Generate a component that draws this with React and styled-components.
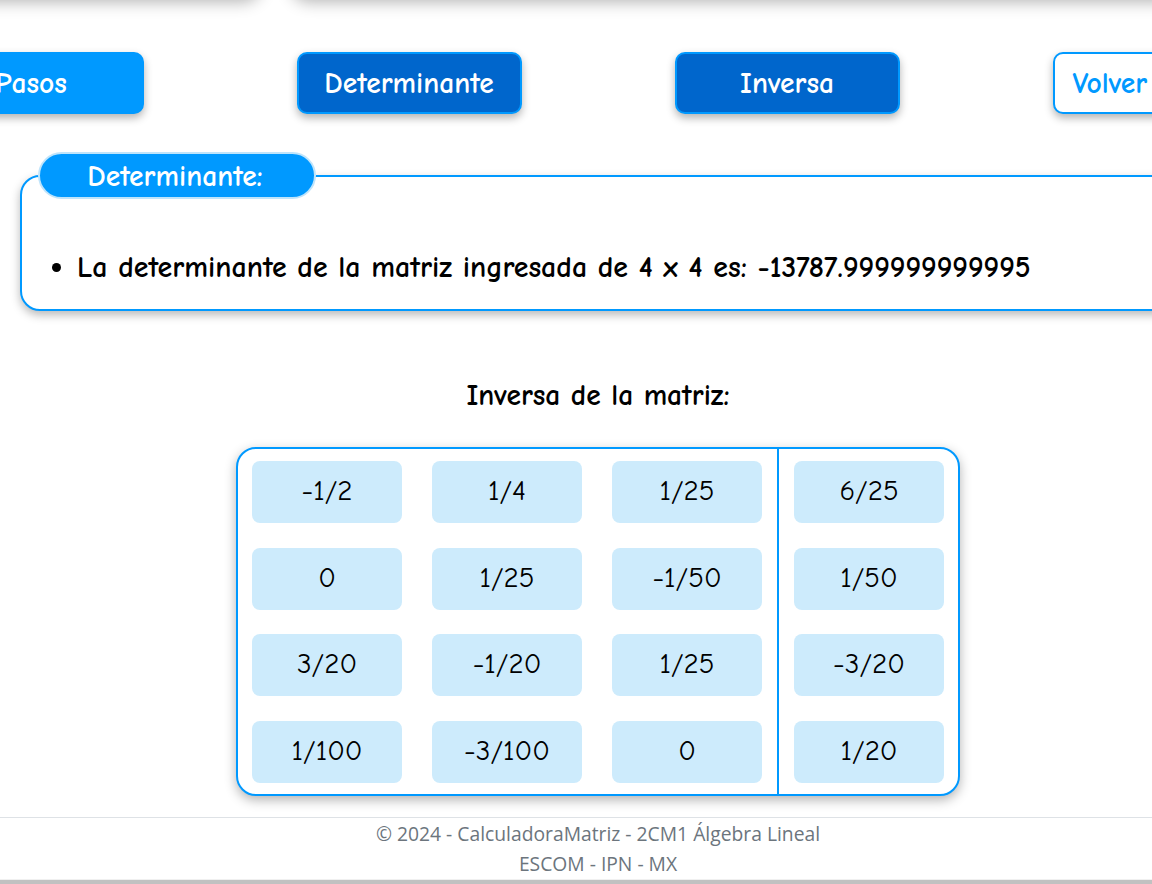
import React from "react";
import styled, { createGlobalStyle } from "styled-components";

const Global = createGlobalStyle`
  html, body { margin: 0; padding: 0; overflow: hidden; background: #fff; }
  body { font-family: "Comic Sans MS", "Comic Neue", Lato, sans-serif; }
`;

const Viewport = styled.div`
  width: 1152px;
  height: 884px;
  overflow: hidden;
  display: flex;
  flex-direction: column;
`;

const Page = styled.div`
  width: 1196px;
  flex: 1;
  display: flex;
  flex-direction: column;
`;

const TopStrip = styled.div`
  height: 0;
  display: flex;
  gap: 28px;
`;

const TopPanel = styled.div`
  height: 40px;
  margin-top: -41px;
  width: ${(p) => p.$w}px;
  margin-left: ${(p) => p.$ml || 0}px;
  border-radius: 22px;
  background: #fff;
  box-shadow: 0 3px 16px rgba(0, 0, 0, 0.3);
`;

const ButtonRow = styled.div`
  margin-top: 52px;
  display: flex;
  justify-content: center;
  gap: 153px;
`;

const Button = styled.button`
  flex: 0 0 225px;
  height: 62px;
  box-sizing: border-box;
  border-radius: 10px;
  border: 2px solid #0099ff;
  background: ${(p) => (p.$variant === "light" ? "#0099ff" : p.$variant === "outline" ? "#ffffff" : "#0066cc")};
  color: ${(p) => (p.$variant === "outline" ? "#0099ff" : "#ffffff")};
  font-family: "Comic Sans MS", "Comic Neue", Lato, sans-serif;
  font-weight: 700;
  font-size: 29.5px;
  text-align: ${(p) => (p.$variant === "outline" ? "left" : "center")};
  padding: ${(p) => (p.$variant === "outline" ? "0 0 0 18px" : "0")};
  box-shadow: 0 4px 8px rgba(0, 0, 0, 0.3);
  cursor: pointer;
`;

const Card = styled.div`
  position: relative;
  margin: 61px 20px 0 20px;
  height: 136px;
  box-sizing: border-box;
  border: 2px solid #0099ff;
  border-radius: 20px;
  background: #fff;
  box-shadow: 0 4px 10px rgba(0, 0, 0, 0.28);
  padding-top: 71px;
`;

const CardTab = styled.div`
  position: absolute;
  left: 16px;
  top: -25px;
  width: 278px;
  height: 47px;
  box-sizing: border-box;
  border-radius: 24px;
  border: 2px solid #bfe4fb;
  background: #0099ff;
  color: #fff;
  font-weight: 700;
  font-size: 29.5px;
  display: flex;
  align-items: center;
  justify-content: center;
  padding-right: 4px;
`;

const List = styled.ul`
  margin: 0;
  padding-left: 55px;
`;

const Item = styled.li`
  font-size: 29.9px;
  line-height: 38px;
  font-weight: 700;
  color: #000;
`;

const SectionTitle = styled.h3`
  margin: 69px 0 0 0;
  text-align: center;
  font-size: 29.5px;
  line-height: 30px;
  font-weight: 700;
  color: #000;
`;

const MatrixBox = styled.div`
  margin: 37px auto 0 auto;
  width: 724px;
  height: 349px;
  box-sizing: border-box;
  border: 2px solid #0099ff;
  border-radius: 20px;
  box-shadow: 0 4px 12px rgba(0, 0, 0, 0.3);
  display: flex;
  background: #fff;
`;

const CellGrid = styled.div`
  display: grid;
  grid-template-columns: repeat(${(p) => p.$cols}, 150px);
  grid-auto-rows: 62px;
  column-gap: 30px;
  row-gap: 24.7px;
  padding: 12px ${(p) => p.$pr}px 0 ${(p) => p.$pl}px;
`;

const Divider = styled.div`
  width: 2px;
  align-self: stretch;
  background: #0099ff;
`;

const Cell = styled.div`
  background: #cdebfc;
  border-radius: 8px;
  display: flex;
  align-items: center;
  justify-content: center;
  font-size: 29px;
  padding-bottom: 3px;
  box-sizing: border-box;
  color: #000;
`;

const Footer = styled.footer`
  margin-top: 21px;
  border-top: 1px solid #dee2e6;
  padding-top: 1px;
  text-align: center;
  font-family: "Open Sans", "Noto Sans", sans-serif;
  font-size: 19.3px;
  line-height: 30px;
  color: #6c757d;
  height: 60px;
`;

const ScrollBand = styled.div`
  height: 5px;
  border-top: 1px solid #f0f0f0;
  background: #c1c1c1;
  margin-top: auto;
  width: 1152px;
`;

const left = [
  ["-1/2", "1/4", "1/25"],
  ["0", "1/25", "-1/50"],
  ["3/20", "-1/20", "1/25"],
  ["1/100", "-3/100", "0"],
];
const right = ["6/25", "1/50", "-3/20", "1/20"];

export default function App() {
  return (
    <Viewport>
      <Global />
      <Page>
        <TopStrip>
          <TopPanel $w={300} $ml={-38} />
          <TopPanel $w={900} />
        </TopStrip>
        <ButtonRow>
          <Button $variant="light">Pasos</Button>
          <Button>Determinante</Button>
          <Button>Inversa</Button>
          <Button $variant="outline">Volver</Button>
        </ButtonRow>
        <Card>
          <CardTab>Determinante:</CardTab>
          <List>
            <Item>La determinante de la matriz ingresada de 4 x 4 es: -13787.999999999995</Item>
          </List>
        </Card>
        <SectionTitle>Inversa de la matriz:</SectionTitle>
        <MatrixBox>
          <CellGrid $cols={3} $pl={14} $pr={15}>
            {left.flat().map((v, i) => (
              <Cell key={i}>{v}</Cell>
            ))}
          </CellGrid>
          <Divider />
          <CellGrid $cols={1} $pl={15} $pr={14}>
            {right.map((v, i) => (
              <Cell key={i}>{v}</Cell>
            ))}
          </CellGrid>
        </MatrixBox>
        <Footer>
          <div>© 2024 - CalculadoraMatriz - 2CM1 Álgebra Lineal</div>
          <div>ESCOM - IPN - MX</div>
        </Footer>
      </Page>
      <ScrollBand />
    </Viewport>
  );
}
